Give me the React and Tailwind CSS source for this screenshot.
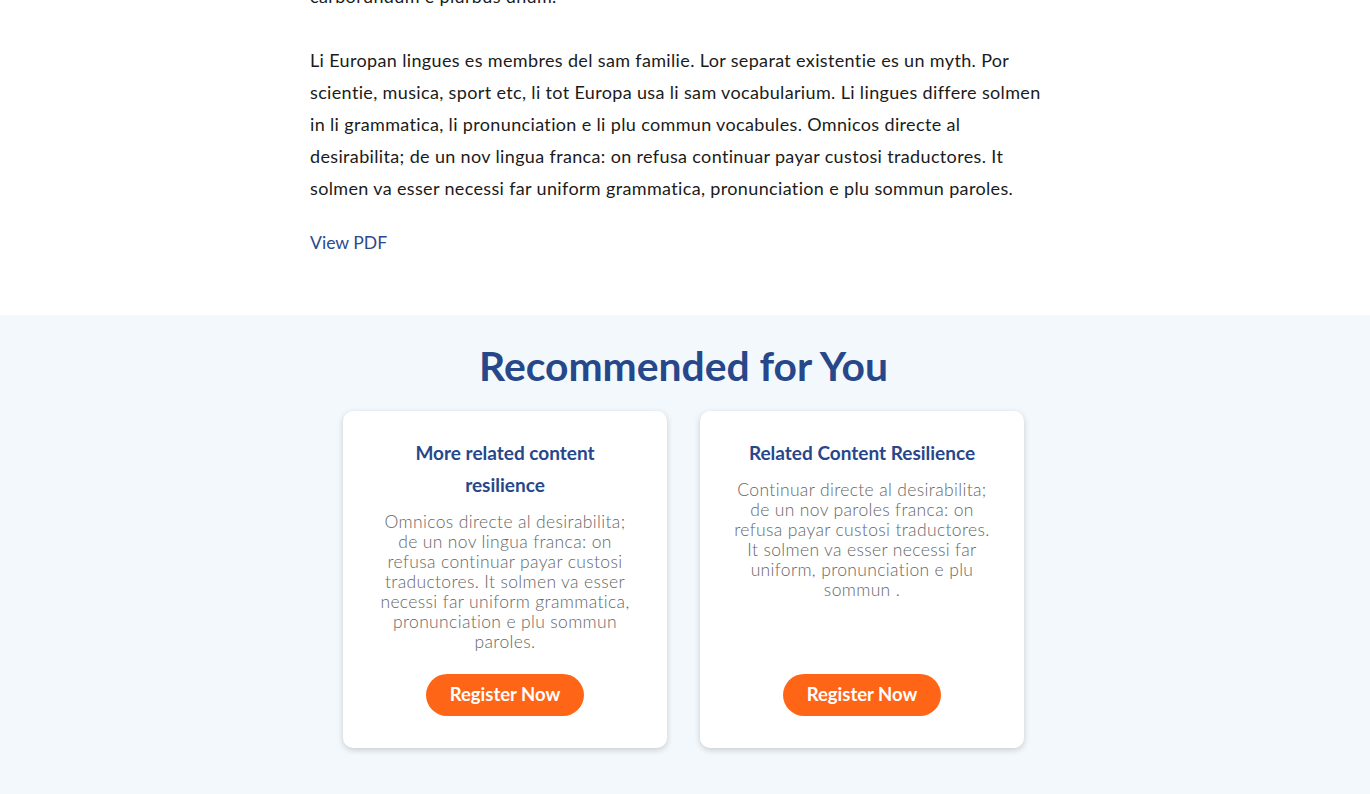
const cards = [
  {
    title: ["More related content", "resilience"],
    text: [
      "Omnicos directe al desirabilita;",
      "de un nov lingua franca: on",
      "refusa continuar payar custosi",
      "traductores. It solmen va esser",
      "necessi far uniform grammatica,",
      "pronunciation e plu sommun",
      "paroles.",
    ],
  },
  {
    title: ["Related Content Resilience"],
    text: [
      "Continuar directe al desirabilita;",
      "de un nov paroles franca: on",
      "refusa payar custosi traductores.",
      "It solmen va esser necessi far",
      "uniform, pronunciation e plu",
      "sommun .",
    ],
  },
];

const bodyLines = [
  "Li Europan lingues es membres del sam familie. Lor separat existentie es un myth. Por",
  "scientie, musica, sport etc, li tot Europa usa li sam vocabularium. Li lingues differe solmen",
  "in li grammatica, li pronunciation e li plu commun vocabules. Omnicos directe al",
  "desirabilita; de un nov lingua franca: on refusa continuar payar custosi traductores. It",
  "solmen va esser necessi far uniform grammatica, pronunciation e plu sommun paroles.",
];

export default function App() {
  return (
    <div className="min-h-screen bg-white font-['Lato',sans-serif] overflow-hidden">
      {/* Article body */}
      <div className="w-[760px] ml-[310px] leading-[32px] text-[#1b1b1b] whitespace-nowrap">
        <p className="mt-[-20px] mb-8 text-[18px] tracking-[0.35px]">carborundum e plurbus unum.</p>
        <p className="text-[18px] tracking-[0.35px]">
          {bodyLines.map((line) => (
            <span key={line} className="block">
              {line}
            </span>
          ))}
        </p>
        <a href="#" className="block mt-[23px] mb-14 text-[17.6px] text-[#2a4a8f]">
          View PDF
        </a>
      </div>

      {/* Recommended */}
      <section className="bg-[#f3f8fc] pt-[29px] pb-12">
        <h2 className="text-center pr-[3px] text-[40.8px] leading-[44px] font-bold text-[#27478b]">
          Recommended for You
        </h2>
        <div className="mt-[23px] flex justify-center gap-[33px] pr-[3px]">
          {cards.map((card) => (
            <div
              key={card.title[0]}
              className="w-[324px] h-[337px] bg-white rounded-[10px] shadow-[0_2px_6px_rgba(0,0,0,0.18)] flex flex-col items-center pt-[26px] pb-8 text-center"
            >
              <h3 className="text-[19px] leading-[32px] font-bold text-[#27478b] whitespace-nowrap">
                {card.title.map((t) => (
                  <span key={t} className="block">
                    {t}
                  </span>
                ))}
              </h3>
              <p className="mt-[11px] text-[17.5px] leading-[20px] tracking-[0.35px] font-light text-[#666666] whitespace-nowrap">
                {card.text.map((t) => (
                  <span key={t} className="block">
                    {t}
                  </span>
                ))}
              </p>
              <button className="mt-auto h-[42px] w-[158px] rounded-full bg-[#ff6516] text-white text-[18.5px] font-bold">
                Register Now
              </button>
            </div>
          ))}
        </div>
      </section>
    </div>
  );
}
